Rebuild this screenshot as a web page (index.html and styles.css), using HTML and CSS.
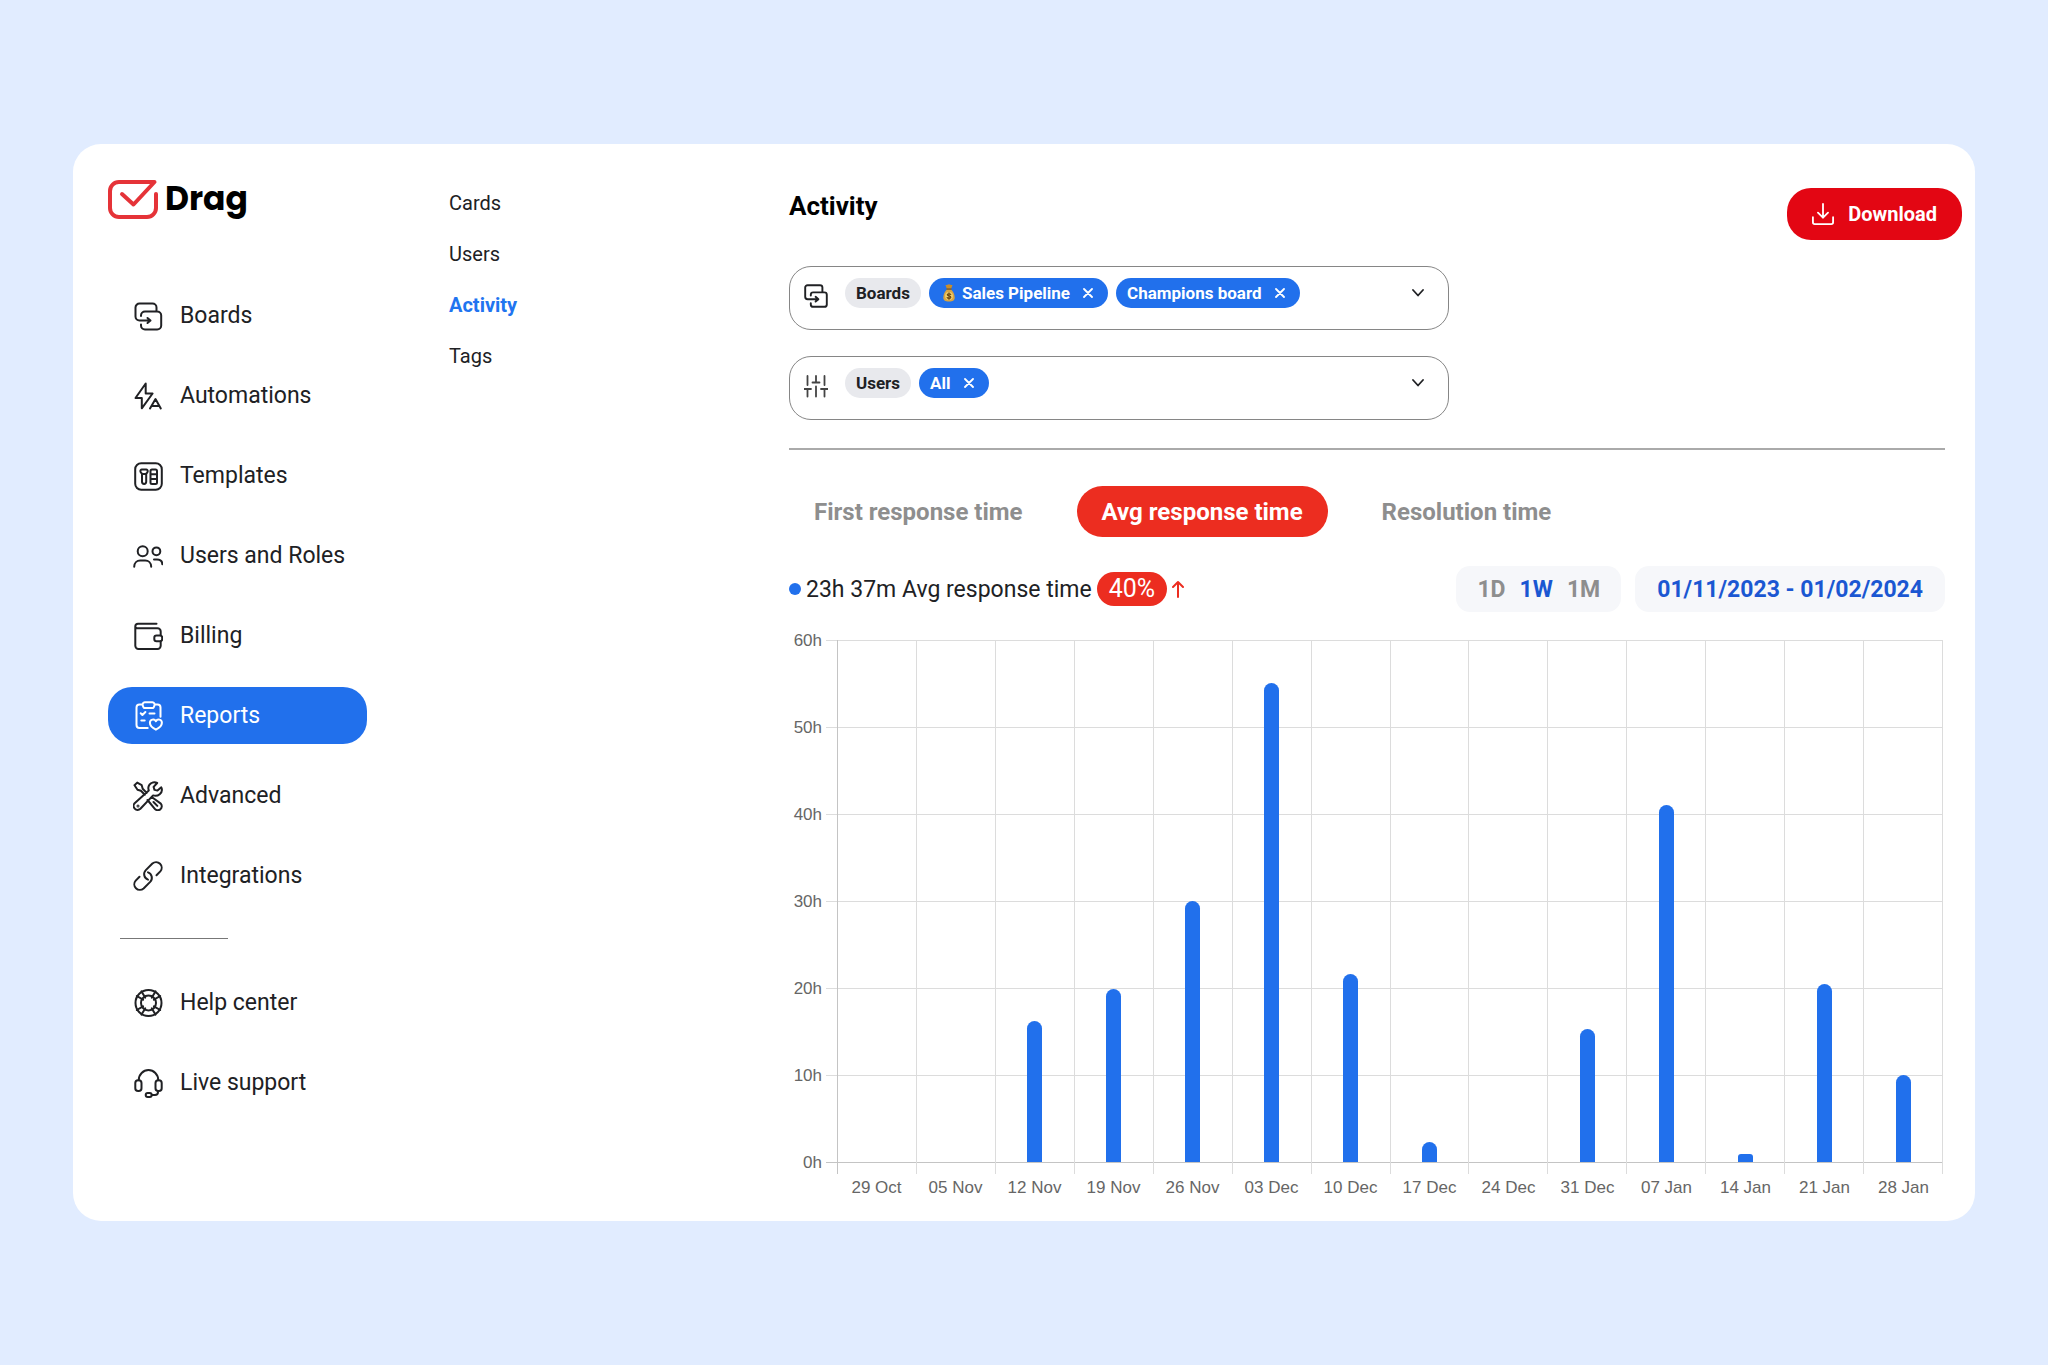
FILE: index.html
```html
<!DOCTYPE html>
<html lang="en">
<head>
<meta charset="utf-8">
<meta name="viewport" content="width=device-width, initial-scale=1">
<title>Drag – Activity report</title>
<link rel="stylesheet" href="styles.css">
</head>
<body>
<div class="card">
  <aside class="sidebar">
    <a class="logo" href="#">
      <svg class="logo-mark" viewBox="0 0 50 39" aria-hidden="true"><path d="M48 14v14a9 9 0 0 1-9 9H11a9 9 0 0 1-9-9V11a9 9 0 0 1 9-9h35.500L25.500 24.500 14 14"/></svg>
      <span>Drag</span>
    </a>
    <nav class="nav" aria-label="Main">
      <a class="nav-item" href="#"><svg class="icon" viewBox="0 0 30 30"><path d="M23.500 10.500v-4a4 4 0 0 0-4-4h-13a4 4 0 0 0-4 4v9a4 4 0 0 0 4 4H17M14.500 17l3 2.500-3 2.500M8 15v-.5a4 4 0 0 1 4-4h12.200a4 4 0 0 1 4 4v10a4 4 0 0 1-4 4H12a4 4 0 0 1-4-4v-1"/></svg>Boards</a>
      <a class="nav-item" href="#"><svg class="icon" viewBox="0 0 30 30"><path d="M12.700 2.500 2.500 17h6.300v10.300L19.600 12.500h-6.900zM17 27.500l5.500-9.500 5.300 9.500M19 25h7"/></svg>Automations</a>
      <a class="nav-item" href="#"><svg class="icon" viewBox="0 0 30 30"><rect x="2.200" y="2.200" width="26.600" height="26.600" rx="6"/><path d="M8.800 8.500h4.400a1.500 1.500 0 0 1 1.500 1.800c-.2 1.400-1 1.800-1.500 2.500v8a2 2 0 0 1-4.200 0v-8c-.6-.7-1.400-1.100-1.600-2.500a1.500 1.500 0 0 1 1.400-1.800zM9 13h4.200M19 8.500h3.500a1.500 1.500 0 0 1 1.500 1.500v11.500a1.500 1.500 0 0 1-1.500 1.500H19a1.500 1.500 0 0 1-1.500-1.500V10A1.500 1.500 0 0 1 19 8.500zM17.500 13.300H24M17.500 18H24"/></svg>Templates</a>
      <a class="nav-item" href="#"><svg class="icon" viewBox="0 0 30 30"><circle cx="9.700" cy="10.300" r="5"/><circle cx="23.400" cy="10.300" r="3.900"/><path d="M1.200 25.800c0-4 2.800-6.300 6-6.300h5c3.200 0 6 2.300 6 6.300M21 18.500h3c3.200 0 5.300 1.600 5.300 4.800"/></svg>Users and Roles</a>
      <a class="nav-item" href="#"><svg class="icon" viewBox="0 0 30 30"><path d="M23.500 2.700H5A2.700 2.700 0 0 0 2.300 5.300v19.500a3.200 3.200 0 0 0 3.200 3.200h19a3.200 3.200 0 0 0 3.200-3.200v-4.300M27.700 14.200v-3.700a3.200 3.200 0 0 0-3.200-3.200H4.300a2 2 0 0 1-2-2"/><rect x="21.300" y="14.500" width="7.900" height="5.800" rx="2.200"/></svg>Billing</a>
      <a class="nav-item nav-item-active" href="#" aria-current="page"><svg class="icon" viewBox="0 0 30 30"><path d="M9.700 3.500H6.500a3 3 0 0 0-3 3V24a3 3 0 0 0 3 3h8.200M21.500 3.500h3a3 3 0 0 1 3 3v9.200M11.800 1.200h7.600a2.400 2.400 0 0 1 2 3.500l-.7 1.600a1 1 0 0 1-.9.600h-8.400a1 1 0 0 1-.9-.6l-.7-1.600a2.400 2.400 0 0 1 2-3.500zM7.700 12.300l1.700 1.700 3-3M16.500 12.400h5M8.300 19.600h3.400M22.900 28.700c-2-1-6-3.700-6-6.900a3.200 3.200 0 0 1 6-1.600 3.200 3.200 0 0 1 6 1.600c0 3.200-4 5.900-6 6.900z"/></svg>Reports</a>
      <a class="nav-item" href="#"><svg class="icon" viewBox="0 0 30 30"><path d="M1.500 4.300 4.200 1.600 8.700 4.200l1 3.500 4 4.200M1.500 4.300l3 4.400 3.400 1 3.900 4M14.500 19l7.300 8.800a3.800 3.800 0 0 0 6-5.200L18.700 16M20.500 21l3.800 3.900M28.300 6.300l-3.800 3.300-3-.7-.9-3 3.600-3.900c-2.700-1.300-6-.6-7.700 1.700-1.300 1.800-1.500 3.800-.7 5.700L1.900 21.900a3.900 3.900 0 0 0 5.500 5.900l12.700-13.400c2.300.8 4.600.5 6.600-1.200 2.200-1.900 2.700-4.500 1.600-6.900z"/><circle cx="5" cy="25" r=".5"/></svg>Advanced</a>
      <a class="nav-item" href="#"><svg class="icon" viewBox="0 0 30 30"><path d="m23.500 14.300 3.800-3.900a5.600 5.600 0 0 0-7.900-7.900l-6.600 6.600a5.800 5.800 0 0 0 2.200 9.500M6.500 15.700l-3.800 3.900a5.600 5.600 0 0 0 7.900 7.900l6.600-6.600a5.800 5.800 0 0 0-2.200-9.500"/></svg>Integrations</a>
    </nav>
    <hr class="nav-divider">
    <nav class="nav" aria-label="Support">
      <a class="nav-item" href="#"><svg class="icon" viewBox="0 0 30 30"><circle cx="15.500" cy="15" r="13"/><circle cx="15.500" cy="15" r="7.500"/><path d="m3.800 8 6.300 3.700M8.500 3.400l3.700 6.200M27.200 8l-6.300 3.700M22.500 3.400l-3.700 6.200M3.800 22l6.300-3.700M8.500 26.600l3.700-6.200M27.200 22l-6.300-3.700M22.500 26.600l-3.700-6.200"/></svg>Help center</a>
      <a class="nav-item" href="#"><svg class="icon" viewBox="0 0 30 30"><path d="M5.800 12.300v-.5a9.700 9.700 0 0 1 19.400 0v.5M25 23.500v.5a3 3 0 0 1-3 3h-3.300"/><rect x="2.300" y="12.200" width="6.200" height="10.800" rx="2.800"/><rect x="22.500" y="12.200" width="6.200" height="10.800" rx="2.800"/><rect x="12.700" y="25" width="6" height="4" rx="2"/></svg>Live support</a>
    </nav>
  </aside>

  <nav class="subnav" aria-label="Reports">
    <a href="#">Cards</a>
    <a href="#">Users</a>
    <a class="subnav-active" href="#" aria-current="page">Activity</a>
    <a href="#">Tags</a>
  </nav>

  <main class="main">
    <header class="header">
      <h1>Activity</h1>
      <button class="download" type="button"><svg viewBox="0 0 24 24" aria-hidden="true"><path d="M12 1v15M6.500 10.500l5.500 5.500 5.500-5.500M1 15.500V21a2 2 0 0 0 2 2h18a2 2 0 0 0 2-2v-5.500"/></svg>Download</button>
    </header>

    <div class="report">
      <section class="filters" aria-label="Filters">
        <div class="filter">
          <svg class="filter-icon" viewBox="0 0 30 30" aria-hidden="true"><path d="M23 10.500v-6a3 3 0 0 0-3-3H4.500a3 3 0 0 0-3 3V16a3 3 0 0 0 3 3H17M14.500 16l3.500 3-3.500 3M8.500 14.500v-1a3 3 0 0 1 3-3h14a3 3 0 0 1 3 3v12a3 3 0 0 1-3 3h-14a3 3 0 0 1-3-3v-1.500"/></svg>
          <div class="chips">
            <span class="chip">Boards</span>
            <span class="chip chip-selected">
              <svg class="money" viewBox="0 0 18 20" aria-hidden="true"><path fill="#c98d2b" d="M5.500 2c1.200.4 2.300-.8 3.500-.8s2.300 1.200 3.500.8l-1.300 3.700H6.800z"/><path fill="#d9a441" d="M7 6.300h4c2.400 2.500 3.700 5.500 3.700 8.300 0 2.700-1.500 4-5.700 4s-5.700-1.300-5.700-4c0-2.800 1.300-5.800 3.700-8.300z"/><path fill="#7a5218" d="M6.500 5.500h5v1.200h-5z"/><circle cx="9" cy="13" r="3.900" fill="#f0cf6b"/><path fill="none" stroke="#6b4612" stroke-width="1.200" d="M10.700 11.400c-.6-.9-3.400-.9-3.400.3 0 1.700 3.500.8 3.500 2.500 0 1.400-2.900 1.400-3.600.4M9 9.800v6.500"/></svg>
              <span>Sales Pipeline</span>
              <button type="button" aria-label="Remove Sales Pipeline"><svg viewBox="0 0 10 10"><path d="m1 1 8 8M9 1 1 9"/></svg></button>
            </span>
            <span class="chip chip-selected"><span>Champions board</span><button type="button" aria-label="Remove Champions board"><svg viewBox="0 0 10 10"><path d="m1 1 8 8M9 1 1 9"/></svg></button></span>
          </div>
          <button class="expand" type="button" aria-label="Choose boards"><svg viewBox="0 0 12 8"><path d="m1 1 5 5.500L11 1"/></svg></button>
        </div>
        <div class="filter">
          <svg class="filter-icon filter-icon-light" viewBox="0 0 24 24" aria-hidden="true"><path d="M3.500 2v9M3.500 15v7.500M12 2v6.500M12 12.500v10M20.500 2v9M20.500 15v7.500M0 15h7M8.500 8.500h7M17 15h7"/></svg>
          <div class="chips">
            <span class="chip">Users</span>
            <span class="chip chip-selected"><span>All</span><button type="button" aria-label="Remove All"><svg viewBox="0 0 10 10"><path d="m1 1 8 8M9 1 1 9"/></svg></button></span>
          </div>
          <button class="expand" type="button" aria-label="Choose users"><svg viewBox="0 0 12 8"><path d="m1 1 5 5.500L11 1"/></svg></button>
        </div>
      </section>

      <hr class="rule">

      <div class="tabs" role="tablist">
        <button class="tab" type="button" role="tab">First response time</button>
        <button class="tab tab-active" type="button" role="tab" aria-selected="true">Avg response time</button>
        <button class="tab" type="button" role="tab">Resolution time</button>
      </div>

      <div class="summary">
        <div class="stat">
          <span class="dot"></span>
          <span>23h 37m Avg response time</span>
          <span class="change">40%</span>
          <svg class="arrow" viewBox="0 0 12 18" aria-hidden="true"><path d="M6 17V2M1 7l5-5 5 5"/></svg>
        </div>
        <div class="range">
          <div class="steps">
            <button type="button">1D</button>
            <button class="step-active" type="button">1W</button>
            <button type="button">1M</button>
          </div>
          <button class="dates" type="button">01/11/2023 - 01/02/2024</button>
        </div>
      </div>

      <section class="chart" aria-label="Average response time per week">
        <div class="hours">
          <div class="hour"><span>60h</span></div>
          <div class="hour"><span>50h</span></div>
          <div class="hour"><span>40h</span></div>
          <div class="hour"><span>30h</span></div>
          <div class="hour"><span>20h</span></div>
          <div class="hour"><span>10h</span></div>
          <div class="hour hour-zero"><span>0h</span></div>
        </div>
        <div class="weeks">
          <div class="week"></div>
          <div class="week"></div>
          <div class="week"><div class="bar" style="height:27%"></div></div>
          <div class="week"><div class="bar" style="height:33.100%"></div></div>
          <div class="week"><div class="bar" style="height:50%"></div></div>
          <div class="week"><div class="bar" style="height:91.700%"></div></div>
          <div class="week"><div class="bar" style="height:36.100%"></div></div>
          <div class="week"><div class="bar" style="height:3.800%"></div></div>
          <div class="week"></div>
          <div class="week"><div class="bar" style="height:25.400%"></div></div>
          <div class="week"><div class="bar" style="height:68.300%"></div></div>
          <div class="week"><div class="bar bar-low" style="height:1.600%"></div></div>
          <div class="week"><div class="bar" style="height:34.100%"></div></div>
          <div class="week"><div class="bar" style="height:16.700%"></div></div>
        </div>
        <div class="week-labels">
          <span>29 Oct</span><span>05 Nov</span><span>12 Nov</span><span>19 Nov</span><span>26 Nov</span><span>03 Dec</span><span>10 Dec</span><span>17 Dec</span><span>24 Dec</span><span>31 Dec</span><span>07 Jan</span><span>14 Jan</span><span>21 Jan</span><span>28 Jan</span>
        </div>
      </section>
    </div>
  </main>
</div>
</body>
</html>
```
FILE: styles.css
```css
* {
  box-sizing: border-box;
}

body {
  margin: 0;
  min-height: 100vh;
  padding: 144px 73px;
  background: #e1ecff;
  color: #202124;
  font-family: Roboto, "Liberation Sans", sans-serif;
}

a {
  color: inherit;
  text-decoration: none;
}

button {
  margin: 0;
  padding: 0;
  border: 0;
  background: none;
  color: inherit;
  font: inherit;
  cursor: pointer;
}

svg {
  display: block;
  flex: none;
  fill: none;
  stroke: currentColor;
  stroke-linecap: round;
  stroke-linejoin: round;
}

.card {
  display: grid;
  grid-template-columns: 259px 258px minmax(0, 1fr);
  column-gap: 82px;
  padding: 0 13px 23px 35px;
  border-radius: 28px;
  background: #fff;
}

/* Sidebar */
.sidebar {
  padding-top: 35px;
}

.logo {
  display: flex;
  align-items: center;
  gap: 7px;
  height: 40px;
  color: #000;
  font: 700 33px/40px Poppins, Inter, sans-serif;
}

.logo-mark {
  width: 50px;
  height: 39px;
  stroke: #e53338;
  stroke-width: 4;
}

.nav {
  display: flex;
  flex-direction: column;
  gap: 23px;
}

.logo + .nav {
  margin-top: 68px;
}

.nav-item {
  display: flex;
  align-items: center;
  gap: 17px;
  height: 57px;
  padding-left: 25px;
  border-radius: 24px;
  font-size: 23px;
  line-height: 29px;
}

.nav-item-active {
  background: #2170ec;
  color: #fff;
}

.icon {
  width: 30px;
  height: 30px;
  stroke-width: 2;
}

.nav-divider {
  width: 108px;
  height: 1px;
  margin: 34px 0 35px 12px;
  border: 0;
  background: #777;
}

/* Report list */
.subnav {
  display: flex;
  flex-direction: column;
  align-items: flex-start;
  gap: 27px;
  padding-top: 47px;
  font-size: 20px;
  line-height: 24px;
}

.subnav-active {
  color: #2174f0;
  font-weight: 700;
}

/* Main column */
.main {
  padding-top: 44px;
}

.header {
  display: flex;
  align-items: flex-start;
  justify-content: space-between;
}

h1 {
  margin: 0;
  color: #000;
  font-size: 26px;
  line-height: 36px;
}

.download {
  display: flex;
  align-items: center;
  gap: 14px;
  height: 52px;
  padding: 0 25px;
  border-radius: 24px;
  background: #e30613;
  color: #fff;
  font-size: 20px;
  font-weight: 700;
}

.download svg {
  width: 22px;
  height: 22px;
  stroke-width: 2;
}

.report {
  padding: 26px 17px 0 0;
}

.filters {
  display: flex;
  flex-direction: column;
  gap: 26px;
  max-width: 660px;
}

.filter {
  display: flex;
  align-items: flex-start;
  gap: 17px;
  min-height: 64px;
  padding: 11px 24px 11px 14px;
  border: 1px solid #868686;
  border-radius: 22px;
}

.filter-icon {
  width: 24px;
  height: 36px;
  stroke-width: 2.4;
}

.filter-icon-light {
  color: #444;
  stroke-width: 1.8;
}

.chips {
  display: flex;
  flex: 1;
  flex-wrap: wrap;
  gap: 8px;
}

.chip {
  display: flex;
  align-items: center;
  gap: 4px;
  height: 30px;
  padding: 0 11px;
  border-radius: 15px;
  background: #e8e9ed;
  font-size: 17px;
  font-weight: 700;
}

.chip-selected {
  padding-right: 15px;
  background: #2170ec;
  color: #fff;
}

.chip button {
  margin-left: 9px;
}

.chip button svg {
  width: 10px;
  height: 10px;
  stroke-width: 1.8;
}

.money {
  width: 18px;
  height: 20px;
  stroke: none;
}

.expand svg {
  width: 12px;
  height: 30px;
  stroke-width: 1.8;
}

.rule {
  height: 2px;
  margin: 28px 0 36px;
  border: 0;
  background: #aaa;
}

.tabs {
  display: flex;
  gap: 29px;
}

.tab {
  height: 51px;
  padding: 0 25px;
  border-radius: 26px;
  color: #8e8e8e;
  font-size: 24px;
  font-weight: 700;
}

.tab-active {
  background: #ec2d20;
  color: #fff;
}

.summary {
  display: flex;
  align-items: center;
  justify-content: space-between;
  margin: 29px 0 28px;
}

.stat {
  display: flex;
  align-items: center;
  gap: 5px;
  font-size: 23px;
}

.dot {
  width: 12px;
  height: 12px;
  border-radius: 6px;
  background: #2170ec;
}

.change {
  padding: 0 12px;
  border-radius: 17px;
  background: #ec2d20;
  color: #fff;
  font-size: 25px;
  line-height: 34px;
}

.arrow {
  width: 12px;
  height: 18px;
  stroke: #ec2d20;
  stroke-width: 2;
}

.range {
  display: flex;
  gap: 14px;
  font-size: 23px;
  font-weight: 700;
}

.steps {
  display: flex;
  gap: 14px;
  height: 46px;
  padding: 0 21px;
  border-radius: 14px;
  background: #f6f7fa;
  color: #8e8e8e;
}

.step-active {
  color: #1b57d2;
}

.dates {
  height: 46px;
  padding: 0 22px;
  border-radius: 14px;
  background: #f6f7fa;
  color: #1b57d2;
}

/* Chart */
.chart {
  display: grid;
  grid-template-columns: 48px minmax(0, 1fr);
  margin-right: 2px;
  color: #666;
  font: 17px/20px "Liberation Sans", Arial, sans-serif;
}

.hours {
  grid-area: 1 / 1 / 2 / 3;
}

.hour {
  display: flex;
  gap: 4px;
  height: 87px;
}

.hour span {
  width: 33px;
  line-height: 2px;
  text-align: right;
}

.hour::after {
  content: "";
  flex: 1;
  height: 1px;
  background: #dcdcdc;
}

.hour-zero {
  height: 12px;
}

.hour-zero::after {
  background: #c4c4c4;
}

.weeks {
  display: grid;
  grid-area: 1 / 2;
  grid-template-columns: repeat(14, minmax(0, 1fr));
  border-right: 1px solid #dcdcdc;
}

.week {
  display: flex;
  align-items: flex-end;
  justify-content: center;
  padding-bottom: 12px;
  border-left: 1px solid #dcdcdc;
}

.week:first-child {
  border-left-color: #c4c4c4;
}

.bar {
  width: 15px;
  border-radius: 8px 8px 0 0;
  background: #2170ec;
}

.bar-low {
  border-radius: 3px 3px 0 0;
}

.week-labels {
  display: grid;
  grid-area: 2 / 2;
  grid-template-columns: repeat(14, minmax(0, 1fr));
  padding-top: 4px;
  text-align: center;
}
```
